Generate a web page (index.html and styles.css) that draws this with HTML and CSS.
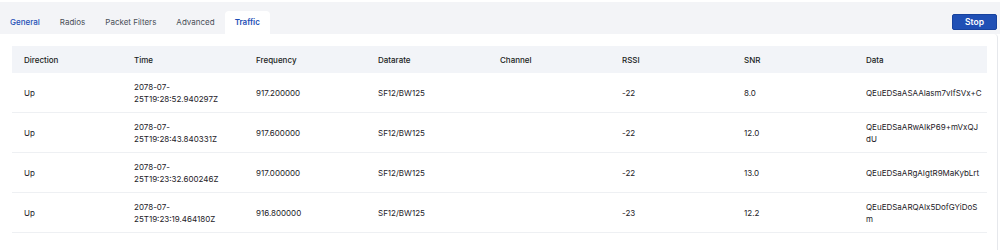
FILE: index.html
```html
<!DOCTYPE html>
<html lang="en">

<head>
	<meta charset="UTF-8">
	<meta name="viewport" content="width=device-width, initial-scale=1.0">
	<title>Gateway Traffic</title>
	<link rel="stylesheet" href="styles.css">
</head>

<body>
	<div class="tabs-bar">
		<ul class="tabs">
			<li class="tab tab-focus">General</li>
			<li class="tab">Radios</li>
			<li class="tab">Packet Filters</li>
			<li class="tab">Advanced</li>
			<li class="tab tab-active">Traffic</li>
		</ul>
		<button class="btn-stop">Stop</button>
	</div>

	<div class="card">
		<table class="traffic">
			<colgroup>
				<col class="col-dir">
				<col class="col-std">
				<col class="col-std">
				<col class="col-std">
				<col class="col-std">
				<col class="col-std">
				<col class="col-std">
				<col class="col-data">
			</colgroup>
			<thead>
				<tr>
					<th>Direction</th>
					<th>Time</th>
					<th>Frequency</th>
					<th>Datarate</th>
					<th>Channel</th>
					<th>RSSI</th>
					<th>SNR</th>
					<th>Data</th>
				</tr>
			</thead>
			<tbody>
				<tr>
					<td>Up</td>
					<td>2078-07-25T19:28:52.940297Z</td>
					<td>917.200000</td>
					<td>SF12/BW125</td>
					<td></td>
					<td>-22</td>
					<td>8.0</td>
					<td class="data">QEuEDSaASAAIasm7vIfSVx+C</td>
				</tr>
				<tr>
					<td>Up</td>
					<td>2078-07-25T19:28:43.840331Z</td>
					<td>917.600000</td>
					<td>SF12/BW125</td>
					<td></td>
					<td>-22</td>
					<td>12.0</td>
					<td class="data">QEuEDSaARwAIkP69+mVxQJdU</td>
				</tr>
				<tr>
					<td>Up</td>
					<td>2078-07-25T19:23:32.600246Z</td>
					<td>917.000000</td>
					<td>SF12/BW125</td>
					<td></td>
					<td>-22</td>
					<td>13.0</td>
					<td class="data">QEuEDSaARgAIgtR9MaKybLrt</td>
				</tr>
				<tr>
					<td>Up</td>
					<td>2078-07-25T19:23:19.464180Z</td>
					<td>916.800000</td>
					<td>SF12/BW125</td>
					<td></td>
					<td>-23</td>
					<td>12.2</td>
					<td class="data">QEuEDSaARQAIx5DofGYiDoSm</td>
				</tr>
			</tbody>
		</table>
	</div>
</body>

</html>
```

FILE: styles.css
```css
body {
	font-family: Inter, 'Noto Sans', sans-serif;
	font-size: 8px;
	color: #1d2127;
	background-color: #ffffff;
	margin: 0;
	padding-top: 2px;
}

.tabs-bar {
	display: flex;
	justify-content: space-between;
	align-items: flex-end;
	height: 32px;
	background-color: #f3f4f7;
}

.tabs {
	display: flex;
	list-style: none;
	margin: 0;
	padding: 0;
}

.tab {
	height: 23px;
	line-height: 23px;
	padding: 0 10px;
	color: #4a4f57;
	border-radius: 4px 4px 0 0;
}

.tab-focus {
	color: #1d4fb6;
	font-weight: 500;
}

.tab-active {
	background-color: #ffffff;
	color: #1d4fb6;
	font-weight: 600;
}

.btn-stop {
	width: 45px;
	height: 16px;
	margin: 0 3px 4px 0;
	padding: 0;
	border: 1px solid #17429e;
	border-radius: 2px;
	background-color: #1f4fb5;
	color: #ffffff;
	font-family: inherit;
	font-size: 8.5px;
	font-weight: 600;
}

.card {
	margin-right: 2px;
	padding: 12px 10px 20px 12px;
	border-right: 1px solid #e6e8ec;
	border-top-right-radius: 4px;
}

.traffic {
	width: 975px;
	table-layout: fixed;
	border-collapse: collapse;
}

.col-dir {
	width: 110px;
}

.col-std {
	width: 122px;
}

.col-data {
	width: 133px;
}

.traffic th {
	height: 27px;
	padding: 0 4px 0 12px;
	background-color: #f2f4f8;
	text-align: left;
	font-weight: 500;
	color: #1a1d22;
}

.traffic td {
	height: 39px;
	padding: 0 4px 0 12px;
	line-height: 12px;
	border-bottom: 1px solid #eef0f3;
	vertical-align: middle;
}

.traffic .data {
	padding-right: 5px;
	word-break: break-all;
}
```
